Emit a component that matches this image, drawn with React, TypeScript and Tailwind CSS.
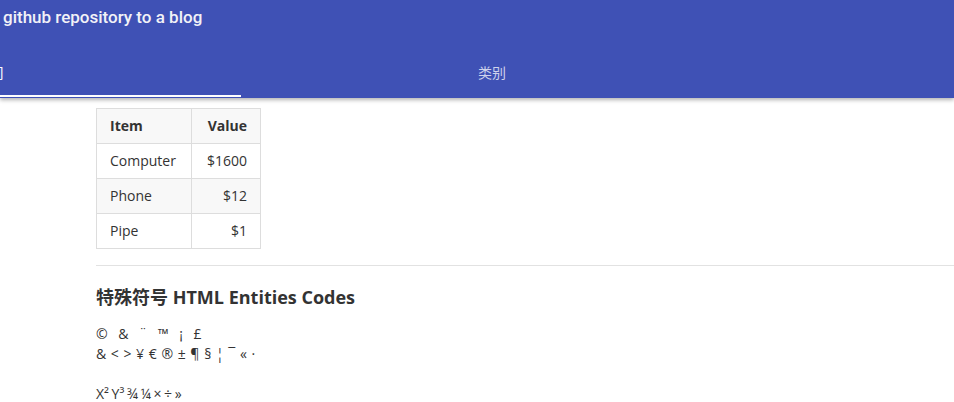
import React from 'react';

const rows = [
  { item: 'Computer', value: '$1600' },
  { item: 'Phone', value: '$12' },
  { item: 'Pipe', value: '$1' },
];

const body = { fontFamily: '"Open Sans", "Noto Sans CJK SC", sans-serif' };

export default function App() {
  return (
    <div className="w-[954px] h-[402px] overflow-hidden bg-white text-[#333]" style={body}>
      <header className="relative z-10 h-[98px] bg-[#3F51B5] shadow-[0_2px_4px_rgba(0,0,0,0.3)]">
        <div
          className="h-[48px] pl-[3px] pt-[7px] text-[17px] leading-5 font-medium text-[#f2f2f7]"
          style={{ fontFamily: 'Roboto, "Noto Sans CJK SC", sans-serif' }}
        >
          github repository to a blog
        </div>
        <div className="flex h-[50px] -ml-[261px]">
          <div className="relative w-[502px] flex items-center justify-center pb-[2px] text-[14px] text-white">
            <span className="pr-[1px]">时间</span>
            <div className="absolute left-0 right-0 bottom-[1px] h-[2px] bg-white" />
          </div>
          <div className="w-[502px] flex items-center justify-center pb-[2px] text-[14px] text-white/75">
            类别
          </div>
        </div>
      </header>

      <main className="pl-[96px] pt-[10px]">
        <table className="border-collapse text-[14px] leading-5">
          <thead>
            <tr className="bg-[#f8f8f8]">
              <th className="w-[95px] h-[35px] border border-[#dddddd] px-[13px] pb-[1px] text-left font-bold">Item</th>
              <th className="w-[69px] h-[35px] border border-[#dddddd] px-[13px] pb-[1px] text-right font-bold">Value</th>
            </tr>
          </thead>
          <tbody>
            {rows.map((r, i) => (
              <tr key={r.item} className={i % 2 === 1 ? 'bg-[#f8f8f8]' : ''}>
                <td className="h-[35px] border border-[#dddddd] px-[13px] pb-[1px]">{r.item}</td>
                <td className="h-[35px] border border-[#dddddd] px-[13px] pb-[1px] text-right">{r.value}</td>
              </tr>
            ))}
          </tbody>
        </table>

        <hr className="mt-[16px] border-t border-[#e2e2e2]" />

        <h2 className="mt-[19px] text-[18px] leading-6 font-bold">特殊符号 HTML Entities Codes</h2>

        <p className="mt-[15px] text-[14px] leading-5">
          <span className="[word-spacing:7px]">© &amp; ¨ ™ ¡ £</span>
          <br />
          <span className="[word-spacing:1px]">&amp; &lt; &gt; ¥ € ® ± ¶ § ¦ ¯ « ·</span>
        </p>
        <p className="mt-[20px] text-[14px] leading-5 [word-spacing:-1px]">X² Y³ ¾ ¼ × ÷ »</p>
      </main>
    </div>
  );
}
